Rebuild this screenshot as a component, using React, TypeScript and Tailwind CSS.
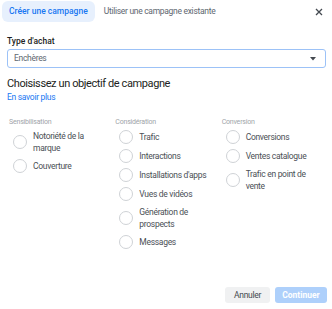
import React from 'react';

interface Group {
  title: string;
  items: string[];
}

const groups: Group[] = [
  { title: 'Sensibilisation', items: ['Notoriété de la marque', 'Couverture'] },
  {
    title: 'Considération',
    items: [
      'Trafic',
      'Interactions',
      "Installations d'apps",
      'Vues de vidéos',
      'Génération de prospects',
      'Messages',
    ],
  },
  { title: 'Conversion', items: ['Conversions', 'Ventes catalogue', 'Trafic en point de vente'] },
];

const Radio: React.FC<{ label: string }> = ({ label }) => (
  <label className="flex items-center gap-[6px] pl-[4px] cursor-pointer">
    <span className="w-[14px] h-[14px] rounded-full border border-[#cfd2d6] bg-white shrink-0" />
    <span className="text-[8.5px] leading-[12px] tracking-[-0.3px] text-[#4b4f56] w-[74px]">{label}</span>
  </label>
);

export default function App() {
  return (
    <div
      className="w-[332px] h-[309px] bg-white flex flex-col overflow-hidden"
      style={{ fontFamily: 'Roboto, "Liberation Sans", sans-serif' }}
    >
      {/* tabs */}
      <div className="flex items-center pl-[2px] pr-[9px] pt-[1px]">
        <button className="h-[21px] px-[7px] rounded-md bg-[#e7f0fd] text-[#1877f2] text-[8.5px] font-medium">
          Créer une campagne
        </button>
        <button className="h-[21px] ml-[2px] px-[7px] text-[#606770] text-[8.5px] tracking-[-0.3px]">
          Utiliser une campagne existante
        </button>
        <button className="ml-auto mt-[1px] text-[#444950]">
          <svg width="8" height="8" viewBox="0 0 8 8">
            <path d="M1 1 L7 7 M7 1 L1 7" stroke="currentColor" strokeWidth="1.3" />
          </svg>
        </button>
      </div>

      {/* type d'achat */}
      <div className="px-[7px] mt-[13px]">
        <div className="text-[8.5px] leading-[12px] font-medium text-[#1c1e21]">Type d'achat</div>
        <div className="mt-[2px] h-[19px] w-[319px] rounded-[3px] border border-[#9cc2f7] flex items-center justify-between pl-[6px] pr-[9px]">
          <span className="text-[8.5px] tracking-[-0.3px] text-[#606770]">Enchères</span>
          <svg width="6" height="4" viewBox="0 0 6 4">
            <path d="M0 0 H6 L3 3.5 Z" fill="#444950" />
          </svg>
        </div>
      </div>

      {/* objective */}
      <div className="px-[7px] mt-[8px]">
        <h2 className="text-[11px] leading-[16px] tracking-[-0.4px] text-[#1c1e21]">
          Choisissez un objectif de campagne
        </h2>
        <a className="block text-[8.5px] leading-[10px] tracking-[-0.3px] text-[#1877f2]">En savoir plus</a>
      </div>

      <div className="grid grid-cols-3 pl-[9px] pr-[4px] mt-[15px]">
        {groups.map((g) => (
          <div key={g.title} className="flex flex-col">
            <div className="text-[7px] leading-[10px] tracking-[-0.2px] text-[#a0a4a9] mb-[3px]">{g.title}</div>
            <div className="flex flex-col gap-[5px]">
              {g.items.map((it) => (
                <Radio key={it} label={it} />
              ))}
            </div>
          </div>
        ))}
      </div>

      {/* footer */}
      <div className="mt-auto flex justify-end gap-[5px] pr-[5px] pb-[6px]">
        <button className="h-[16px] w-[45px] rounded-[3px] bg-[#f0f1f2] text-[8.5px] tracking-[-0.3px] text-[#444950]">
          Annuler
        </button>
        <button className="h-[16px] w-[52px] rounded-[3px] bg-[#aed0fb] text-[8.5px] font-bold text-white">
          Continuer
        </button>
      </div>
    </div>
  );
}
